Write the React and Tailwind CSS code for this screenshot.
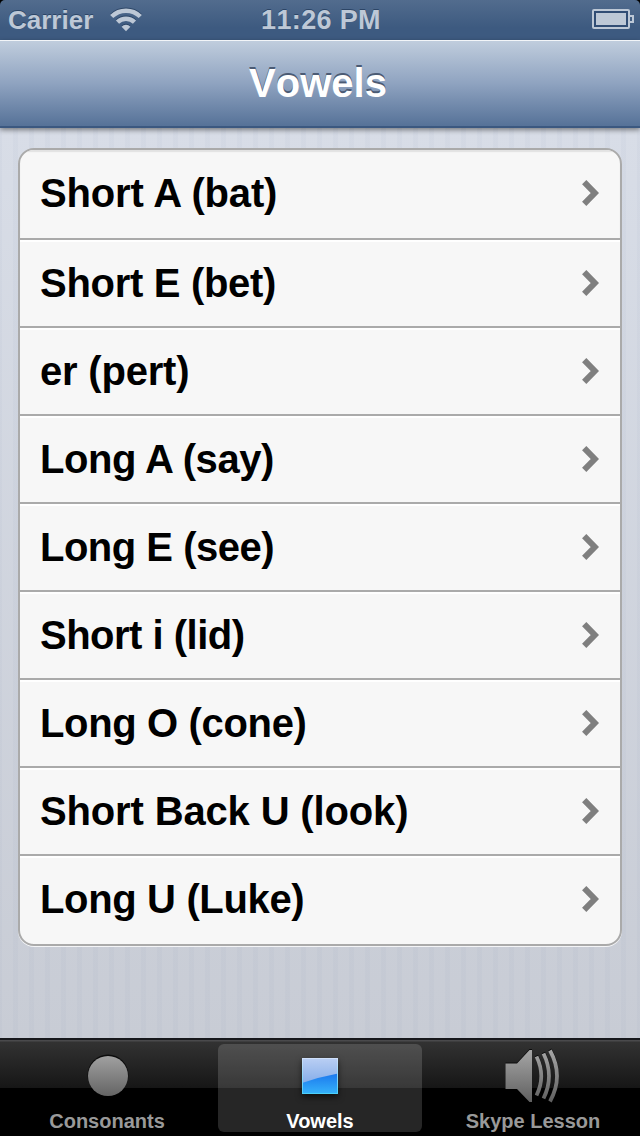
const vowels = [
  { label: "Short A (bat)", tracking: "tracking-[-0.15px]" },
  { label: "Short E (bet)", tracking: "tracking-[-0.3px]" },
  { label: "er (pert)", tracking: "tracking-[-0.2px]" },
  { label: "Long A (say)", tracking: "tracking-[-0.45px]" },
  { label: "Long E (see)", tracking: "tracking-[-0.5px]" },
  { label: "Short i (lid)", tracking: "tracking-[-0.5px]" },
  { label: "Long O (cone)", tracking: "tracking-[-0.35px]" },
  { label: "Short Back U (look)", tracking: "tracking-[-0.15px]" },
  { label: "Long U (Luke)", tracking: "tracking-[-0.35px]" },
];

const WifiIcon = () => (
  <svg className="w-8 h-6 [filter:drop-shadow(0_-1px_0_#2c4566)]" viewBox="0 0 32 24" fill="none" stroke="#bdc8d6" strokeWidth="4.5">
    <path d="M1.700 8.500a20.500 20.500 0 0 1 28.600 0" />
    <path d="M7.500 14.200a12.200 12.200 0 0 1 17 0" />
    <path d="M16 23.200l-4.400-4.500a6 6 0 0 1 8.800 0z" fill="#bdc8d6" stroke="none" />
  </svg>
);

const BatteryIcon = () => (
  <svg className="w-[42px] h-5 relative -top-px" viewBox="0 0 42 20">
    <rect x="1" y="1" width="36" height="18" rx="1" fill="#314d74" stroke="#bdc8d6" strokeWidth="2" />
    <rect x="4" y="4" width="30" height="12" fill="#bdc8d6" />
    <path d="M38 7h3v6h-3" fill="none" stroke="#bdc8d6" strokeWidth="2" />
  </svg>
);

const Chevron = () => (
  <svg className="w-[18px] h-[26px]" viewBox="0 0 18 26" fill="none" stroke="#7f7f7f" strokeWidth="6">
    <path d="M2.200 2.200L12.800 13L2.200 23.800" />
  </svg>
);

const CircleIcon = () => (
  <svg className="w-14 h-14 shrink-0" viewBox="0 0 56 56">
    <defs>
      <linearGradient id="circleFill" x1="0" y1="0" x2="0" y2="1">
        <stop offset="0" stopColor="#a0a0a0" />
        <stop offset="1" stopColor="#646464" />
      </linearGradient>
    </defs>
    <circle cx="29" cy="27" r="20.5" fill="#0c0c0c" />
    <circle cx="29" cy="28" r="20" fill="url(#circleFill)" />
  </svg>
);

const SquareIcon = () => (
  <svg className="w-14 h-14 shrink-0 [filter:drop-shadow(0_3px_3px_rgba(0,0,0,0.6))]" viewBox="0 0 56 56">
    <defs>
      <linearGradient id="squareTop" x1="0" y1="0" x2="0" y2="1">
        <stop offset="0" stopColor="#bacff4" />
        <stop offset="1" stopColor="#6f9fe4" />
      </linearGradient>
      <linearGradient id="squareBottom" x1="0" y1="0" x2="0" y2="1">
        <stop offset="0" stopColor="#1b78ee" />
        <stop offset="1" stopColor="#36b3fa" />
      </linearGradient>
      <linearGradient id="squareEdge" x1="0" y1="0" x2="0" y2="1">
        <stop offset="0" stopColor="#cfe0fa" />
        <stop offset="1" stopColor="#4cd0fa" />
      </linearGradient>
    </defs>
    <rect x="10" y="10" width="36" height="36" fill="url(#squareTop)" />
    <path d="M10 35Q27 29 46 25.500V46H10z" fill="url(#squareBottom)" />
    <rect x="10.500" y="10.500" width="35" height="35" fill="none" stroke="url(#squareEdge)" />
  </svg>
);

const SpeakerIcon = () => (
  <svg className="w-14 h-14 shrink-0 overflow-visible [filter:drop-shadow(0_-1px_0_#0c0c0c)]" viewBox="0 0 56 56">
    <defs>
      <linearGradient id="speakerFill" gradientUnits="userSpaceOnUse" x1="0" y1="2" x2="0" y2="54">
        <stop offset="0" stopColor="#a6a6a6" />
        <stop offset="1" stopColor="#606060" />
      </linearGradient>
    </defs>
    <path d="M0.500 15.500H12L24.500 2H27V54H24.500L12 41H0.500z" fill="url(#speakerFill)" />
    <g fill="none" stroke="url(#speakerFill)" strokeWidth="3.800">
      <path d="M31.500 8.500Q41 28 31.500 47.500" />
      <path d="M38.500 5.500Q49.500 28 38.500 50.500" />
      <path d="M45 2.500Q59 28 45 53.500" />
    </g>
  </svg>
);

const tabs = [
  { label: "Consonants", icon: <CircleIcon /> },
  { label: "Vowels", icon: <SquareIcon />, active: true },
  { label: "Skype Lesson", icon: <SpeakerIcon /> },
];

const StatusBar = () => (
  <div className="bg-black">
    <div className="h-10 grid grid-cols-3 items-center rounded-t-[5px] bg-linear-to-b from-[#526c8e] to-[#3d5a80] to-70% pl-2 pr-1.5 text-[26px] leading-10 font-bold text-[#bdc8d6] [text-shadow:0_-1px_0_#2c4566]">
      <div className="flex items-center gap-[17px]">
        <span>Carrier</span>
        <WifiIcon />
      </div>
      <div className="text-center text-[27px] tracking-[0.35px] [font-kerning:none]">11:26 PM</div>
      <div className="flex justify-end">
        <BatteryIcon />
      </div>
    </div>
  </div>
);

const TabItem = ({ label, icon, active }) => (
  <div
    className={
      active
        ? "w-[204px] h-[88px] flex flex-col items-center rounded-md bg-white/15 pt-1 text-white"
        : "w-[204px] h-[88px] flex flex-col items-center pt-1 text-[#999999]"
    }
  >
    {icon}
    <span className="mt-[7px] text-[20px] leading-5 font-bold whitespace-nowrap">{label}</span>
  </div>
);

export default function App() {
  return (
    <div className="w-[640px] h-[1136px] flex flex-col overflow-hidden bg-black font-['Liberation_Sans',Arial,sans-serif]">
      <StatusBar />

      {/* Navigation bar */}
      <header className="relative h-[88px] shrink-0 flex items-center justify-center border-t border-t-[#f2f5f8] border-b-2 border-b-[#3b5880] bg-linear-to-b from-[#c0cddd] via-[#8fa3c0] to-[#567298] pr-1 pb-px shadow-[0_2px_5px_rgba(0,0,0,0.45)]">
        <h1 className="text-[40px] leading-none font-bold text-white [font-kerning:none] [text-shadow:0_-2px_0_#4b5b74]">Vowels</h1>
      </header>

      {/* Pinstriped table background */}
      <main className="h-[910px] shrink-0 px-[18px] pt-5 bg-[repeating-linear-gradient(90deg,rgba(100,120,160,0.04)_0px,rgba(100,120,160,0.04)_2px,transparent_2px,transparent_13px,rgba(100,120,160,0.04)_13px,rgba(100,120,160,0.04)_16px),linear-gradient(180deg,#d8dde7,#c8ccd5)]">
        <ul className="h-[798px] overflow-hidden rounded-[16px] border-2 border-[#aaaaaa] bg-[#f7f7f7] shadow-[0_1px_0_#f4f5f7]">
          {vowels.map(({ label, tracking }, i) => (
            <li
              key={label}
              className={
                i === 0
                  ? "h-[90px] flex items-center justify-between border-b-2 border-[#aaaaaa] pl-5 pr-5 pb-0.5 shadow-[inset_0_2px_1px_#e2e2e2]"
                  : "h-[88px] flex items-center justify-between border-b-2 border-[#aaaaaa] pl-5 pr-5 shadow-[inset_0_2px_0_#ffffff] last:border-b-0 last:pb-0.5"
              }
            >
              <span className={`text-[40px] leading-none font-bold text-black ${tracking}`}>{label}</span>
              <Chevron />
            </li>
          ))}
        </ul>
      </main>

      {/* Tab bar */}
      <nav className="h-[98px] shrink-0 grid grid-cols-[214px_212px_214px] justify-items-center border-t-2 border-[#17181c] pt-1 bg-[linear-gradient(180deg,#4a4a4c_0px,#4a4a4c_1px,#323232_2px,#161616_48px,#000000_48px)]">
        {tabs.map((tab) => (
          <TabItem key={tab.label} {...tab} />
        ))}
      </nav>
    </div>
  );
}
